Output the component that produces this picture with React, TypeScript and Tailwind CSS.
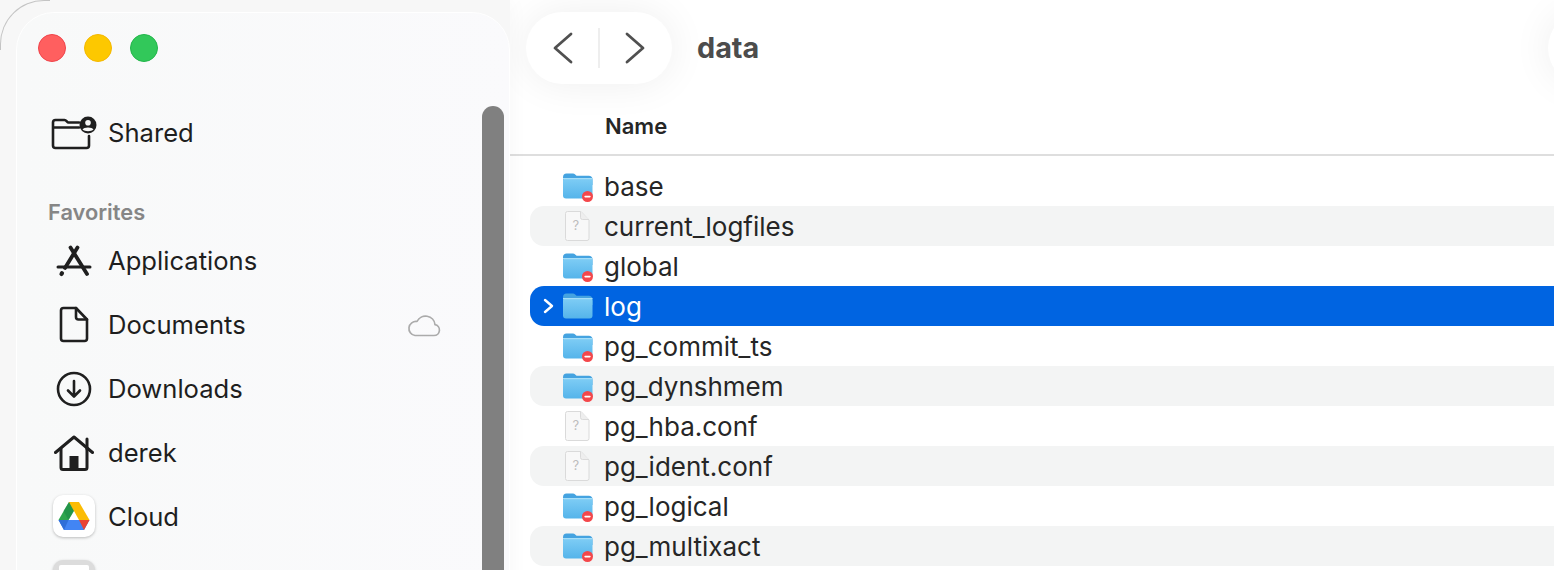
const font = { fontFamily: "Inter, 'Noto Sans', sans-serif" };

const files = [
  { name: "base", kind: "locked" },
  { name: "current_logfiles", kind: "doc" },
  { name: "global", kind: "locked" },
  { name: "log", kind: "open" },
  { name: "pg_commit_ts", kind: "locked" },
  { name: "pg_dynshmem", kind: "locked" },
  { name: "pg_hba.conf", kind: "doc" },
  { name: "pg_ident.conf", kind: "doc" },
  { name: "pg_logical", kind: "locked" },
  { name: "pg_multixact", kind: "locked" },
];

function FolderIcon({ badge }: { badge: boolean }) {
  return (
    <svg width="32" height="30" viewBox="0 0 32 30" className="mt-[1px] shrink-0">
      <defs>
        <linearGradient id="fb" x1="0" y1="0" x2="0" y2="1">
          <stop offset="0" stopColor="#7fcdf5" />
          <stop offset="1" stopColor="#55b4ea" />
        </linearGradient>
      </defs>
      <path d="M1 5.500C1 3 2.200 1.500 4.500 1.500h6.500c1.600 0 2.300 1.400 3.600 2.200h12.200C29 3.700 30.500 5 30.500 7v6H1z" fill="#45a3e0" />
      <rect x="1" y="6" width="29.500" height="20.500" rx="3" fill="url(#fb)" />
      <rect x="1" y="6" width="29.500" height="1.200" fill="#a5def8" />
      {badge && (
        <g>
          <circle cx="25.500" cy="24.500" r="5.500" fill="#f4474a" />
          <rect x="22.300" y="23.700" width="6.400" height="1.700" rx="0.800" fill="#fff" />
        </g>
      )}
    </svg>
  );
}

function DocIcon() {
  return (
    <svg width="32" height="32" viewBox="0 0 32 32" className="shrink-0">
      <path d="M5.500 1.500h13.500l8 8.500v18.500a2 2 0 0 1-2 2H5.500a2 2 0 0 1-2-2V3.500a2 2 0 0 1 2-2z" fill="#f8f8f8" stroke="#dadada" />
      <path d="M18.500 1.500v6a2 2 0 0 0 2 2h6.500" fill="#eee" stroke="#dadada" />
      <text x="10.500" y="20" fontSize="13" fill="#bdbdbd" style={font}>?</text>
    </svg>
  );
}

function FileRow({ name, kind, index }: { name: string; kind: string; index: number }) {
  const selected = kind === "open";
  return (
    <div
      className={
        "flex h-10 items-center rounded-l-[14px] " +
        (selected ? "bg-[#0064e1] text-white" : index % 2 === 1 ? "bg-[#f3f4f4] text-[#262626]" : "text-[#262626]")
      }
    >
      <div className="flex w-[32px] justify-end pr-[6px]">
        {selected && (
          <svg width="14" height="18" viewBox="0 0 14 18">
            <path d="M3 3l7 6-7 6" fill="none" stroke="#fff" strokeWidth="2.400" strokeLinecap="round" strokeLinejoin="round" />
          </svg>
        )}
      </div>
      <div className="w-[42px]">
        {kind === "doc" ? <DocIcon /> : <FolderIcon badge={kind === "locked"} />}
      </div>
      <span className="pt-[2px] text-[26px] leading-none">{name}</span>
    </div>
  );
}

function SideItem({ icon, label, extra }: { icon: React.ReactNode; label: string; extra?: React.ReactNode }) {
  return (
    <div className="flex h-16 items-center text-[25.600px] text-[#1e1e1e]">
      <div className="flex w-[48px] justify-center">{icon}</div>
      <span className="ml-[10px]">{label}</span>
      {extra}
    </div>
  );
}

const stroke = { fill: "none", stroke: "#1f1f1f", strokeWidth: 2.600, strokeLinecap: "round", strokeLinejoin: "round" } as const;

export default function App() {
  return (
    <div className="relative h-[570px] w-[1554px] overflow-hidden bg-[#f7f7f7]" style={font}>
      <div className="flex h-[590px] bg-white">
        {/* sidebar */}
        <div className="relative z-10 w-[510px] shrink-0 bg-[#f7f7f7] pl-[16px] pt-[12px] shadow-[0_0_20px_rgba(0,0,0,0.04)]">
          <div className="relative h-[600px] w-[494px] rounded-t-[38px] border border-white bg-gradient-to-r from-[#f8f9f9] to-[#fafafc] pl-[21px] pt-[21px]">
            <div className="flex gap-[18px]">
              <div className="h-7 w-7 rounded-full border border-[#f0444b] bg-[#ff5f5f]" />
              <div className="h-7 w-7 rounded-full border border-[#f5b800] bg-[#fdc800]" />
              <div className="h-7 w-7 rounded-full border border-[#22b64a] bg-[#32c85a]" />
            </div>
            <div className="absolute right-[5px] top-[93px] h-[500px] w-[22px] rounded-t-[11px] bg-[#808080]" />

            <div className="mt-[39px] pl-[12px]">
              <SideItem
                label="Shared"
                icon={
                  <svg width="46" height="34" viewBox="0 0 46 34">
                    <path d="M28 6.500H17.500c-1.500 0-2-2.500-4-2.500H4.500A2.500 2.500 0 0 0 2 6.500v23A2.500 2.500 0 0 0 4.500 32h31a2.500 2.500 0 0 0 2.500-2.500V20" {...stroke} />
                    <path d="M3 11.500h25" {...stroke} />
                    <circle cx="37" cy="9" r="8.500" fill="#1f1f1f" />
                    <circle cx="37" cy="6.800" r="2.800" fill="#f8f9f9" />
                    <path d="M31.500 13.500c1-2.800 10-2.800 11 0-2.500 2.200-8.500 2.200-11 0z" fill="#f8f9f9" />
                  </svg>
                }
              />
              <div className="ml-[-2px] mt-[35px] h-[25px] text-[21.800px] font-semibold leading-[25px] text-[#868686]">Favorites</div>
              <div className="mt-[4px]">
                <SideItem
                  label="Applications"
                  icon={
                    <svg width="36" height="32" viewBox="0 0 36 32" fill="none" stroke="#1f1f1f" strokeLinecap="round">
                      <path d="M21.500 2.500L9 23" strokeWidth="3.800" />
                      <path d="M14.500 2.500L31 29" strokeWidth="3.800" />
                      <path d="M2 22h32" strokeWidth="3" />
                      <path d="M5.500 29l0.500-0.800" strokeWidth="4.200" />
                    </svg>
                  }
                />
                <SideItem
                  label="Documents"
                  extra={
                    <svg width="34" height="24" viewBox="0 0 34 24" fill="none" stroke="#ababab" strokeWidth="1.700" strokeLinejoin="round" className="absolute left-[390px]">
                      <path d="M8 22.500h19a5.500 5.500 0 0 0 1-10.900A9.500 9.500 0 0 0 10 8.500 7 7 0 0 0 8 22.500z" />
                    </svg>
                  }
                  icon={
                    <svg width="30" height="38" viewBox="0 0 30 38" {...stroke}>
                      <path d="M4.500 2h12.500l11 11.500v19a2.500 2.500 0 0 1-2.500 2.500H4.500A2.500 2.500 0 0 1 2 32.500V4.500A2.500 2.500 0 0 1 4.500 2z" />
                      <path d="M17 2v9a2.500 2.500 0 0 0 2.500 2.500H28" />
                    </svg>
                  }
                />
                <SideItem
                  label="Downloads"
                  icon={
                    <svg width="36" height="36" viewBox="0 0 36 36" {...stroke}>
                      <circle cx="18" cy="18" r="16" />
                      <path d="M18 10v15M12 19.500l6 6 6-6" />
                    </svg>
                  }
                />
                <SideItem
                  label="derek"
                  icon={
                    <svg width="40" height="36" viewBox="0 0 40 36">
                      <path d="M1.500 17.500L20 2l18.500 15.500" {...stroke} strokeWidth={3} />
                      <path d="M7 14v18.500a2 2 0 0 0 2 2h22a2 2 0 0 0 2-2V14" {...stroke} strokeWidth={3} />
                      <path d="M33 14V4" {...stroke} strokeWidth={3} />
                      <rect x="15.500" y="21" width="9" height="13" fill="#1f1f1f" />
                    </svg>
                  }
                />
                <SideItem
                  label="Cloud"
                  icon={
                    <div className="mt-[-2px] flex h-[42px] w-[42px] items-center justify-center rounded-[10px] bg-white shadow-[0_1px_3px_rgba(0,0,0,0.25)]">
                      <svg width="32" height="30" viewBox="0 0 32 30">
                        <path d="M11 1h10L10.500 19H0.500z" fill="#2ea64e" />
                        <path d="M11 1L16 10 10.500 19 5.500 10z" fill="#1d8a46" opacity="0.600" />
                        <path d="M21 1l10.500 18H21L11 1z" fill="#fbbc04" />
                        <path d="M0.500 19H31.500L26 29H6z" fill="#4285f4" />
                        <path d="M0.500 19H10.500L6 29z" fill="#2f6fd8" />
                        <path d="M21 19H31.500L26 29z" fill="#ea4335" />
                      </svg>
                    </div>
                  }
                />
                <SideItem
                  label=""
                  icon={
                    <div className="flex h-[42px] w-[42px] items-start justify-center rounded-[10px] bg-[#dcdcdc] pt-[5px] shadow-[0_1px_3px_rgba(0,0,0,0.25)]">
                      <div className="h-[32px] w-[30px] rounded-[2px] bg-white" />
                    </div>
                  }
                />
              </div>
            </div>
          </div>
        </div>

        {/* file list */}
        <div className="min-w-0 flex-1 bg-white">
          <div className="flex h-[84px] items-start pl-[16px] pt-[12px]">
            <div className="flex h-[72px] w-[146px] shrink-0 items-center justify-center rounded-[36px] bg-white shadow-[0_0_40px_rgba(0,0,0,0.07)]">
              <svg width="100" height="40" viewBox="0 0 100 40" fill="none" stroke="#505050" strokeWidth="2.800" strokeLinecap="round" strokeLinejoin="round">
                <path d="M22 6L6 20l16 14" />
                <path d="M50 0v40" stroke="#e8e8e8" strokeWidth="1.500" strokeLinecap="butt" />
                <path d="M78 6l16 14-16 14" />
              </svg>
            </div>
            <span className="ml-[25px] mt-[18px] text-[28.800px] font-bold leading-[36px] text-[#4c4c4c]">data</span>
            <div className="ml-auto mr-[-94px] h-[72px] w-[100px] shrink-0 rounded-[36px] bg-white shadow-[0_0_40px_rgba(0,0,0,0.07)]" />
          </div>
          <div className="flex h-[72px] items-center border-b-2 border-[#dedede] pl-[95px] pt-[14px] text-[22px] font-semibold text-[#262626]">Name</div>
          <div className="pl-[20px] pt-[10px]">
            {files.map((f, i) => (
              <FileRow key={f.name} name={f.name} kind={f.kind} index={i} />
            ))}
          </div>
        </div>
      </div>
      {/* window corner */}
      <div className="absolute left-0 top-0 z-20 h-[50px] w-[50px] rounded-tl-[44px] border-l border-t border-[#c4c4c4]" />
    </div>
  );
}
